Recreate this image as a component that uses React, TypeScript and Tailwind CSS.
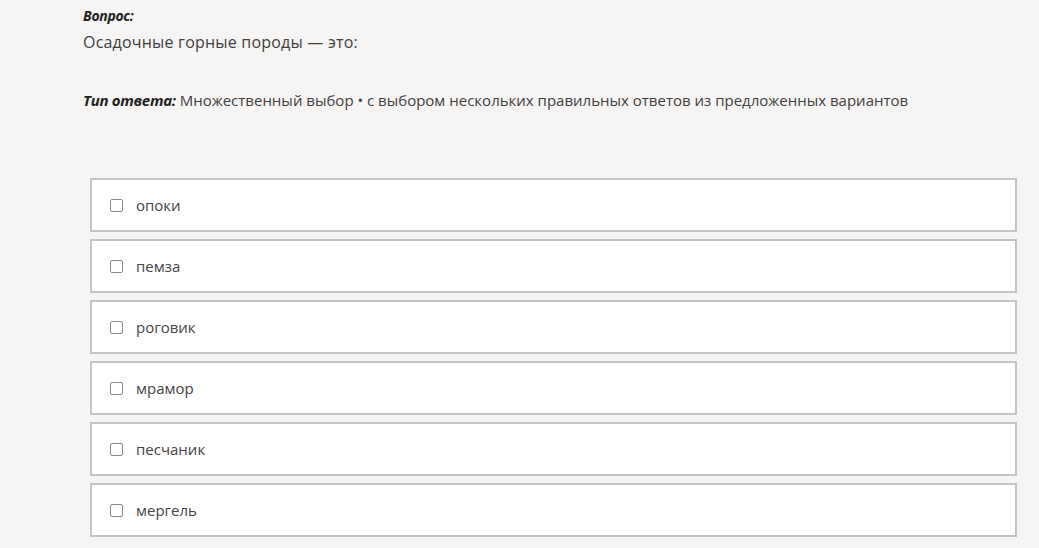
const options = ["опоки", "пемза", "роговик", "мрамор", "песчаник", "мергель"]

const App = () => {
    return (
        <div className="w-[1039px] h-[548px] overflow-hidden bg-[#f6f5f3] text-[#3a3a3a]" style={{ fontFamily: '"Open Sans", "Noto Sans", sans-serif' }}>
            <div className="pl-[83px] pt-[6px]">
                <div className="text-[14px] font-bold italic text-[#222] tracking-[-0.3px] leading-[20px]">Вопрос:</div>
                <div className="text-[16px] leading-[24px] mt-[4px] text-[#404040] tracking-[0.2px]">Осадочные горные породы — это:</div>
                <div className="text-[15px] leading-[22px] mt-[35px] text-[#404040]">
                    <span className="font-bold italic text-[#222] tracking-[-0.3px]">Тип ответа:</span> Множественный выбор • с выбором нескольких правильных ответов из предложенных вариантов
                </div>
            </div>
            <div className="flex flex-col gap-[7px] ml-[90px] mt-[67px] w-[927px]">
                {options.map(o => (
                    <label key={o} className="flex items-center h-[54px] bg-white border-2 border-[#c4c4c4] pl-[18px] cursor-pointer">
                        <span className="size-[13px] border border-[#8a8a8a] rounded-[2px] bg-white"></span>
                        <span className="ml-[13px] text-[15px] text-[#444]">{o}</span>
                    </label>
                ))}
            </div>
        </div>
    )
}

export default App
